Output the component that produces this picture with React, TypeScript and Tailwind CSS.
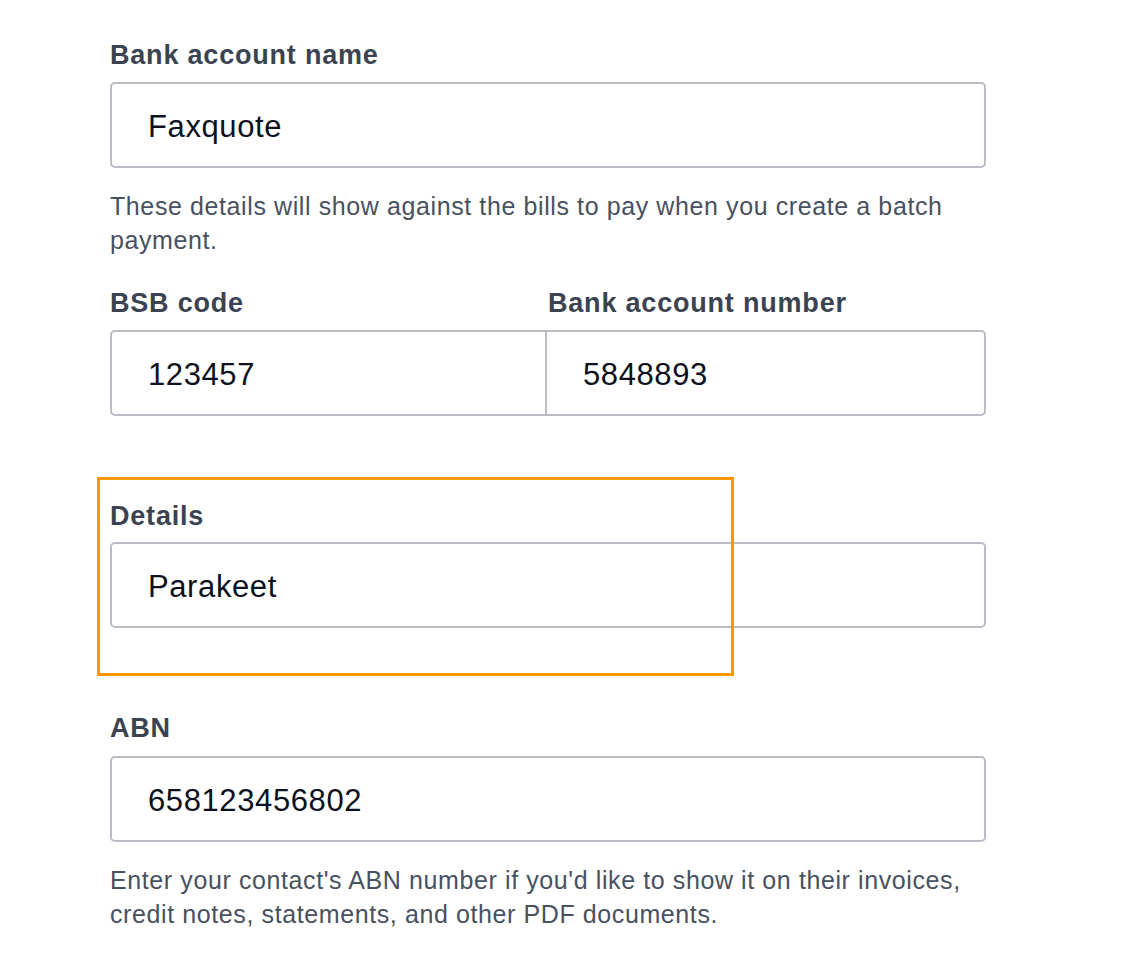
const font = { fontFamily: '"Liberation Sans", Arial, sans-serif' };

function Label({ children }: { children: React.ReactNode }) {
  return <p className="text-[27px] leading-[30px] font-bold tracking-[0.8px] text-[#3b4351]">{children}</p>;
}

function Field({ value, className = '' }: { value: string; className?: string }) {
  return (
    <div className={`h-[86px] flex items-center pt-[4px] pl-[36px] bg-white border-2 border-[#b9bcc3] text-[31px] tracking-[0.6px] text-[#0c111d] ${className}`}>
      {value}
    </div>
  );
}

function Help({ children }: { children: React.ReactNode }) {
  return <p className="text-[25px] leading-[34px] tracking-[0.6px] text-[#485160]">{children}</p>;
}

export default function App() {
  return (
    <div className="w-[1140px] h-[961px] bg-white" style={font}>
      <div className="pl-[110px] pt-[40px] w-[986px]">
        <Label>Bank account name</Label>
        <Field value="Faxquote" className="mt-[12px] rounded-[5px]" />
        <div className="mt-[21px]">
          <Help>These details will show against the bills to pay when you create a batch payment.</Help>
        </div>

        <div className="mt-[31px] grid grid-cols-[436px_1fr]">
          <Label>BSB code</Label>
          <div className="pl-[2px]"><Label>Bank account number</Label></div>
          <Field value="123457" className="mt-[12px] rounded-l-[5px] border-r" />
          <Field value="5848893" className="mt-[12px] rounded-r-[5px] border-l pl-[36px]" />
        </div>

        <div className="relative mt-[85px]">
          <div className="absolute left-[-13px] top-[-24px] w-[637px] h-[199px] border-[3px] border-[#ff9800] pointer-events-none" />
          <Label>Details</Label>
          <Field value="Parakeet" className="mt-[11px] rounded-[5px]" />
        </div>

        <div className="mt-[85px]">
          <Label>ABN</Label>
          <Field value="658123456802" className="mt-[13px] rounded-[5px]" />
        </div>
        <div className="mt-[21px]">
          <Help>Enter your contact's ABN number if you'd like to show it on their invoices, credit notes, statements, and other PDF documents.</Help>
        </div>
      </div>
    </div>
  );
}
